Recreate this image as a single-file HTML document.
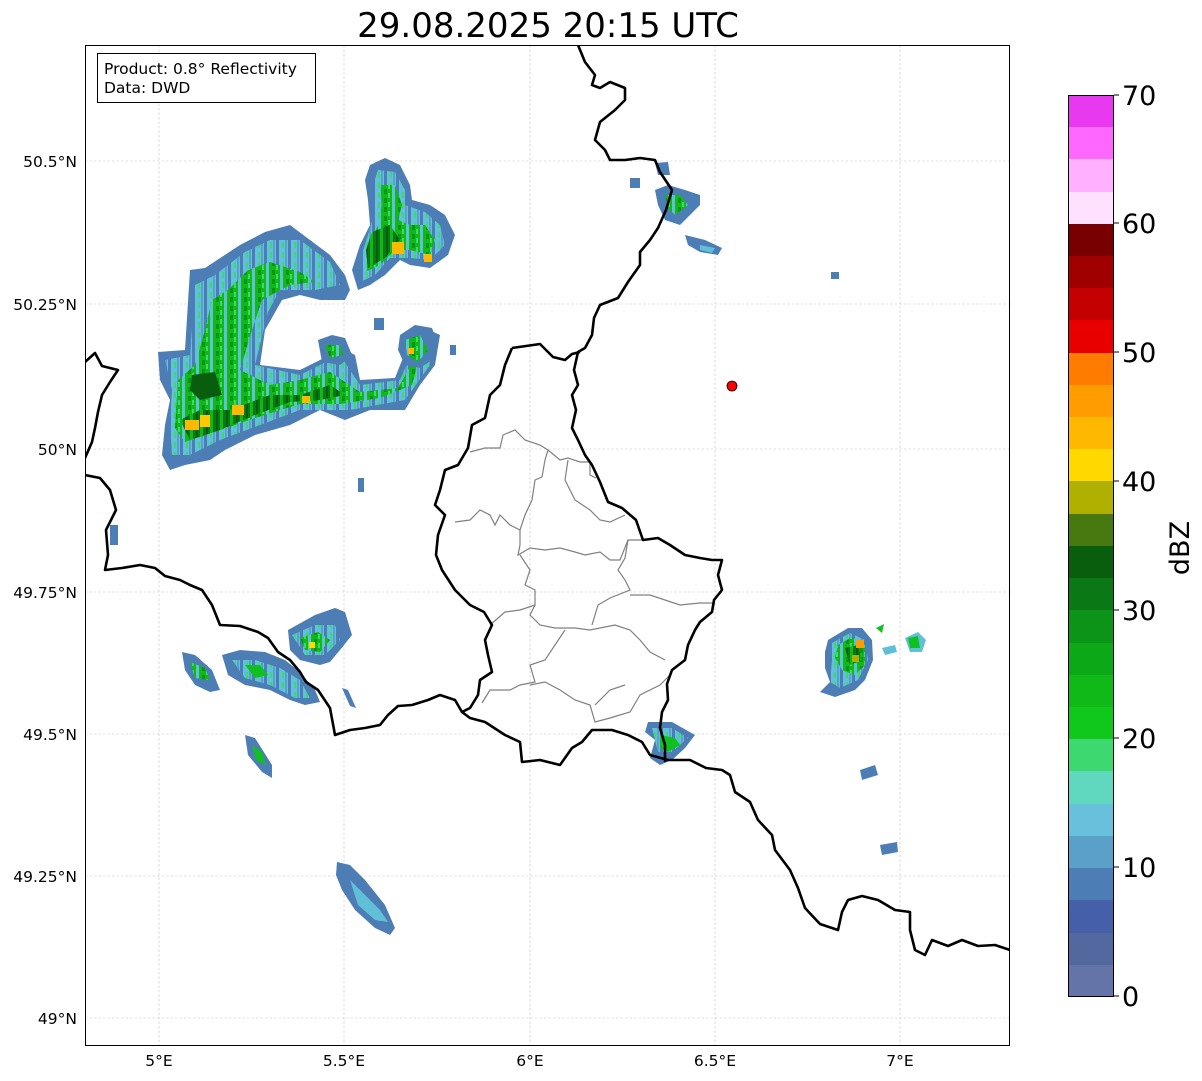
<!DOCTYPE html>
<html><head><meta charset="utf-8"><style>
html,body{margin:0;padding:0;background:#fff;width:1202px;height:1081px;overflow:hidden}
svg{display:block;font-family:"DejaVu Sans","Liberation Sans",sans-serif}
</style></head><body>
<svg width="1202" height="1081" viewBox="0 0 1202 1081" xmlns="http://www.w3.org/2000/svg">
<defs>
<clipPath id="c"><rect x="85" y="45" width="925" height="1001"/></clipPath>
<pattern id="pg" width="14" height="9" patternUnits="userSpaceOnUse">
<rect width="14" height="9" fill="#10b818"/><rect x="0" width="3" height="9" fill="#5fc0d8"/><rect x="6" y="0" width="3" height="5" fill="#0c9418"/><rect x="10" y="4" width="2" height="5" fill="#3dd870"/>
</pattern>
<pattern id="pc" width="12" height="10" patternUnits="userSpaceOnUse">
<rect width="12" height="10" fill="#62c0da"/><rect x="0" width="3" height="10" fill="#4c7db5"/><rect x="6" y="2" width="2" height="6" fill="#3dd870"/><rect x="9" y="0" width="2" height="10" fill="#5ba0c8"/>
</pattern>
<pattern id="pd" width="10" height="8" patternUnits="userSpaceOnUse">
<rect width="10" height="8" fill="#0a7814"/><rect x="0" width="3" height="8" fill="#10b818"/><rect x="6" width="2" height="8" fill="#085e0c"/>
</pattern>
</defs>
<rect width="1202" height="1081" fill="#fff"/>
<text x="548" y="37" font-size="34" text-anchor="middle" fill="#000">29.08.2025 20:15 UTC</text>
<g clip-path="url(#c)">
<g stroke="#c4c4c4" stroke-width="0.6" stroke-dasharray="2.5,2">
<line x1="159" y1="45" x2="159" y2="1046"/><line x1="344" y1="45" x2="344" y2="1046"/><line x1="530" y1="45" x2="530" y2="1046"/><line x1="715" y1="45" x2="715" y2="1046"/><line x1="900" y1="45" x2="900" y2="1046"/>
<line x1="85" y1="161" x2="1010" y2="161"/><line x1="85" y1="304" x2="1010" y2="304"/><line x1="85" y1="449" x2="1010" y2="449"/><line x1="85" y1="592" x2="1010" y2="592"/><line x1="85" y1="734" x2="1010" y2="734"/><line x1="85" y1="876" x2="1010" y2="876"/><line x1="85" y1="1018" x2="1010" y2="1018"/>
</g>
<g>
<polygon fill="#4c7db5" points="158,352 185,350 190,270 205,268 240,245 265,232 290,225 330,255 345,275 350,290 345,300 320,300 300,295 282,300 265,330 260,365 300,370 330,355 345,350 355,355 360,380 395,378 410,340 425,328 440,335 435,365 420,385 405,410 370,410 345,420 320,410 290,425 255,435 225,450 210,460 185,465 170,470 162,455 165,425 170,400 160,380"/>
<polygon fill="url(#pc)" points="165,360 190,355 195,285 215,275 245,252 270,240 300,240 330,262 340,285 315,290 280,290 268,312 255,365 300,375 340,355 360,385 400,380 415,345 430,340 430,365 405,400 350,410 300,410 260,425 220,440 190,455 172,455 170,420 172,390"/>
<polygon fill="url(#pg)" points="178,380 195,365 205,330 212,300 228,290 248,270 270,262 300,272 315,282 290,285 262,300 252,330 240,370 270,385 300,380 330,372 360,392 398,388 415,358 420,355 412,385 380,398 340,404 300,404 255,418 215,432 185,442 175,428"/>
<polygon fill="url(#pd)" points="180,420 200,410 230,410 270,395 300,395 330,385 345,395 320,400 290,402 255,415 220,430 190,440"/>
<polygon fill="#085e0c" points="192,375 215,372 222,395 200,400 190,390"/>
<rect x="185" y="420" width="14" height="10" fill="#ffb800"/><rect x="200" y="415" width="10" height="12" fill="#ffc800"/><rect x="232" y="405" width="12" height="10" fill="#ffb800"/><rect x="302" y="396" width="8" height="7" fill="#ffb800"/>
<polygon fill="#4c7db5" points="370,165 385,158 400,165 410,185 412,200 430,205 445,215 455,235 448,255 430,268 410,265 400,260 385,275 370,285 358,290 352,270 360,245 370,225 368,200 365,180"/>
<polygon fill="url(#pc)" points="378,170 395,172 405,190 405,205 425,212 440,225 445,245 430,260 410,258 390,258 375,275 360,282 360,260 368,235 375,210 372,188"/>
<polygon fill="url(#pg)" points="380,185 395,185 402,205 398,220 410,225 425,225 435,240 430,255 410,250 395,250 380,265 365,272 370,245 378,225 382,205"/>
<polygon fill="url(#pd)" points="372,232 390,225 400,240 385,258 368,268 366,250"/>
<rect x="392" y="242" width="12" height="12" fill="#ffb800"/><rect x="424" y="254" width="8" height="8" fill="#ffb800"/>
<polygon fill="#4c7db5" points="400,335 415,325 432,328 438,345 432,360 420,368 405,365 398,350"/>
<polygon fill="url(#pg)" points="405,340 420,335 428,350 418,362 407,355"/>
<rect x="408" y="348" width="6" height="6" fill="#ffb800"/>
<polygon fill="#4c7db5" points="318,340 332,335 345,338 352,355 340,365 322,362"/>
<polygon fill="url(#pg)" points="325,345 340,345 343,355 330,358"/>
<rect x="374" y="318" width="10" height="12" fill="#4c7db5"/><rect x="450" y="345" width="6" height="10" fill="#4c7db5"/>
<rect x="358" y="478" width="6" height="14" fill="#4c7db5"/>
<rect x="110" y="525" width="8" height="20" fill="#4c7db5"/>
<rect x="630" y="178" width="10" height="10" fill="#4c7db5"/>
<rect x="831" y="272" width="8" height="7" fill="#4c7db5"/>
<polygon fill="#4c7db5" points="860,770 875,765 878,775 862,780"/>
<polygon fill="#4c7db5" points="880,845 897,842 898,852 882,855"/>
<polygon fill="#4c7db5" points="655,190 668,185 685,190 700,195 700,205 690,215 680,225 665,220 658,205"/>
<polygon fill="url(#pg)" points="665,195 680,195 688,205 675,215 668,208"/>
<polygon fill="#4c7db5" points="655,163 668,162 670,175 658,175"/>
<polygon fill="#4c7db5" points="685,235 705,240 722,248 718,255 700,252 688,245"/>
<polygon fill="#60c0d8" points="700,245 715,248 712,253 700,250"/>
<polygon fill="#4c7db5" points="288,630 315,615 335,608 345,612 352,635 340,650 330,662 320,665 300,660 290,650"/>
<polygon fill="url(#pc)" points="292,635 315,625 335,625 340,640 325,655 305,655"/>
<polygon fill="url(#pg)" points="300,638 318,632 330,640 320,652 305,650"/>
<rect x="309" y="642" width="6" height="6" fill="#ffd800"/>
<polygon fill="#4c7db5" points="222,655 240,650 265,652 285,660 300,672 315,690 320,702 305,705 290,700 270,690 245,685 228,675"/>
<polygon fill="url(#pc)" points="232,660 255,660 280,668 300,680 310,698 295,698 270,685 245,678"/>
<polygon fill="#10c020" points="245,665 260,665 268,675 255,678"/>
<polygon fill="#4c7db5" points="182,652 195,655 212,670 220,690 210,692 195,685 185,670"/>
<polygon fill="url(#pg)" points="190,662 205,668 210,680 195,678"/>
<polygon fill="#4c7db5" points="245,735 255,738 272,765 272,778 262,772 248,755"/>
<polygon fill="#10c020" points="252,745 262,752 266,765 256,760"/>
<polygon fill="#4c7db5" points="337,862 350,865 365,880 385,905 395,928 390,935 375,928 355,910 342,890 336,875"/>
<polygon fill="#60c0d8" points="350,880 365,895 380,910 388,922 375,920 358,905"/>
<polygon fill="#4c7db5" points="342,688 348,690 356,708 350,706"/>
<polygon fill="#4c7db5" points="648,722 672,722 695,735 685,748 672,760 660,765 650,758 655,740 645,732"/>
<polygon fill="url(#pc)" points="652,728 672,728 688,738 672,752 658,752"/>
<polygon fill="#10c020" points="660,735 675,738 680,745 668,752 660,748"/>
<polygon fill="#4c7db5" points="828,640 848,628 862,628 872,640 873,660 865,680 855,690 835,697 820,692 830,682 825,668 825,652"/>
<polygon fill="url(#pc)" points="832,643 850,633 865,640 868,660 858,680 840,688 830,682 832,660"/>
<polygon fill="url(#pg)" points="838,645 852,637 865,645 865,665 855,675 842,670 835,658"/>
<polygon fill="url(#pd)" points="845,648 858,645 862,660 850,665"/>
<rect x="856" y="640" width="8" height="8" fill="#ff9c00"/><rect x="852" y="655" width="7" height="7" fill="#b0b000"/>
<polygon fill="#60c0d8" points="905,638 918,632 926,640 922,652 910,652"/>
<polygon fill="#10c020" points="908,638 918,636 920,648 910,648"/>
<polygon fill="#60c0d8" points="882,648 895,645 897,652 885,655"/>
<polygon fill="#10c020" points="876,628 884,624 882,633"/>
</g>
<g fill="none" stroke="#808080" stroke-width="1.2">
<path d="M470,452 L485,448 500,448 503,435 515,430 525,440 540,445 548,450 545,460 542,477 535,480 532,500 525,515 520,530 520,545 518,555 530,548 545,550 560,548 575,552 585,555 600,552 610,560 620,560 628,540 648,540"/>
<path d="M455,522 L470,520 480,510 490,515 495,525 500,515 510,525 520,530"/>
<path d="M548,450 L560,460 568,458 580,462 590,462 590,475 596,478"/>
<path d="M568,460 L565,480 575,500 590,510 600,520 610,522 625,515"/>
<path d="M520,555 L530,570 525,585 535,590 535,605 530,615 540,625 555,628 575,628 590,630 600,628 615,625 630,630 640,640 650,652 665,660"/>
<path d="M535,605 L520,610 505,612 490,625"/>
<path d="M628,540 L625,558 618,570 625,580 630,590 610,598 598,605 592,625"/>
<path d="M630,595 L650,595 665,600 680,605 700,603 715,603"/>
<path d="M565,630 L555,645 545,660 530,665 535,682 520,685 510,690 490,690 482,703"/>
<path d="M530,685 L545,682 560,690 575,700 590,705 595,722 610,718 630,712 640,695 660,685 670,675"/>
<path d="M595,705 L610,690 625,685"/>
</g>
<g fill="none" stroke="#000" stroke-width="2.6" stroke-linejoin="round">
<path d="M578,45 L585,62 595,75 592,85 600,88 610,82 625,88 625,100 615,110 600,122 595,140 605,150 610,160 625,160 640,158 655,160 660,172 672,190 666,210 658,228 650,240 640,252 640,265 628,282 618,298 600,305 594,318 592,335 585,348 578,352 574,370 578,385 572,395 576,410 572,428 578,440 585,455 592,465 600,482 608,502 622,508 636,520 643,540 658,538 670,545 685,555 700,558 712,560 722,560 718,575 722,590 714,600 712,612 700,622 695,630 688,645 685,660 672,670 667,684 668,700 662,712 660,728 665,745 665,762"/>
<path d="M512,348 L540,344 553,357 565,360 572,354 580,352"/>
<path d="M512,348 L505,365 500,385 490,395 485,418 472,425 468,448 458,465 445,470 440,490 435,505 445,515 438,535 436,555 442,570 455,590 470,605 484,612 492,625 485,640 488,655 492,672 480,680 478,695 470,708 462,712 470,718 485,722 505,735 520,742 522,762 540,760 560,765 572,748 582,742 592,730 612,730 628,735 642,742 650,755 668,760 690,760 706,768 722,770 730,775 735,792 750,802 758,820 772,835 775,850 790,870 798,888 805,908 820,924 838,930 842,912 848,900 862,896 878,900 895,910 910,912 910,930 915,950 925,955 932,940 948,946 962,940 978,946 995,945 1010,950"/>
<path d="M85,475 L100,478 110,490 116,510 106,530 108,555 105,570 122,568 140,565 155,568 165,576 180,580 190,585 202,590 212,605 220,625 240,626 258,632 268,638 278,652 290,660 300,672 306,682 318,690 330,708 335,735 350,730 365,728 380,725 388,715 398,706 412,705 428,700 440,695 455,700 462,712"/>
<path d="M85,362 L95,353 102,366 118,370 110,382 102,395 98,412 95,428 92,442 85,458"/>
</g>
<circle cx="732" cy="386" r="5" fill="#f00" stroke="#000" stroke-width="0.8"/>
</g>
<rect x="85.5" y="45.5" width="924" height="1000" fill="none" stroke="#000" stroke-width="1"/>
<rect x="97.5" y="53.5" width="218" height="49" fill="#fff" stroke="#000" stroke-width="1"/>
<text x="104" y="74" font-size="15.5">Product: 0.8° Reflectivity</text>
<text x="104" y="93" font-size="15.5">Data: DWD</text>
<g font-size="15.5" text-anchor="end">
<text x="77" y="167">50.5°N</text><text x="77" y="310">50.25°N</text><text x="77" y="455">50°N</text><text x="77" y="598">49.75°N</text><text x="77" y="740">49.5°N</text><text x="77" y="882">49.25°N</text><text x="77" y="1024">49°N</text>
</g>
<g font-size="15.5" text-anchor="middle">
<text x="159" y="1066">5°E</text><text x="344" y="1066">5.5°E</text><text x="530" y="1066">6°E</text><text x="715" y="1066">6.5°E</text><text x="900" y="1066">7°E</text>
</g>
<g>
<rect x="1068" y="964" width="46" height="33" fill="#6474a8"/>
<rect x="1068" y="932" width="46" height="33" fill="#5468a0"/>
<rect x="1068" y="900" width="46" height="33" fill="#4560a8"/>
<rect x="1068" y="867" width="46" height="33" fill="#4c7db5"/>
<rect x="1068" y="835" width="46" height="33" fill="#5ba0c8"/>
<rect x="1068" y="803" width="46" height="33" fill="#68c0dc"/>
<rect x="1068" y="771" width="46" height="33" fill="#60d8c0"/>
<rect x="1068" y="738" width="46" height="33" fill="#3dd870"/>
<rect x="1068" y="706" width="46" height="33" fill="#10c81c"/>
<rect x="1068" y="674" width="46" height="33" fill="#10b818"/>
<rect x="1068" y="642" width="46" height="33" fill="#0ca818"/>
<rect x="1068" y="610" width="46" height="33" fill="#0c9418"/>
<rect x="1068" y="577" width="46" height="33" fill="#0a7814"/>
<rect x="1068" y="545" width="46" height="33" fill="#085e0c"/>
<rect x="1068" y="513" width="46" height="33" fill="#487810"/>
<rect x="1068" y="481" width="46" height="33" fill="#b0b000"/>
<rect x="1068" y="448" width="46" height="33" fill="#ffd800"/>
<rect x="1068" y="416" width="46" height="33" fill="#ffb800"/>
<rect x="1068" y="384" width="46" height="33" fill="#ff9c00"/>
<rect x="1068" y="352" width="46" height="33" fill="#ff7c00"/>
<rect x="1068" y="320" width="46" height="33" fill="#e80000"/>
<rect x="1068" y="287" width="46" height="33" fill="#c40000"/>
<rect x="1068" y="255" width="46" height="33" fill="#a00000"/>
<rect x="1068" y="223" width="46" height="33" fill="#780000"/>
<rect x="1068" y="191" width="46" height="33" fill="#ffe0ff"/>
<rect x="1068" y="159" width="46" height="33" fill="#ffb0ff"/>
<rect x="1068" y="126" width="46" height="33" fill="#ff68ff"/>
<rect x="1068" y="95" width="46" height="32" fill="#e838f0"/>
<rect x="1068.5" y="95.5" width="45" height="901" fill="none" stroke="#000" stroke-width="1"/>
<g stroke="#000" stroke-width="1"><line x1="1114" y1="996" x2="1119" y2="996"/><line x1="1114" y1="867" x2="1119" y2="867"/><line x1="1114" y1="738" x2="1119" y2="738"/><line x1="1114" y1="610" x2="1119" y2="610"/><line x1="1114" y1="481" x2="1119" y2="481"/><line x1="1114" y1="352" x2="1119" y2="352"/><line x1="1114" y1="223" x2="1119" y2="223"/><line x1="1114" y1="95" x2="1119" y2="95"/></g>
<g font-size="27">
<text x="1122" y="1006">0</text><text x="1122" y="877">10</text><text x="1122" y="748">20</text><text x="1122" y="620">30</text><text x="1122" y="491">40</text><text x="1122" y="362">50</text><text x="1122" y="233">60</text><text x="1122" y="105">70</text>
</g>
<text x="0" y="0" font-size="27" transform="translate(1189,548) rotate(-90)" text-anchor="middle">dBZ</text>
</g>
</svg>
</body></html>
